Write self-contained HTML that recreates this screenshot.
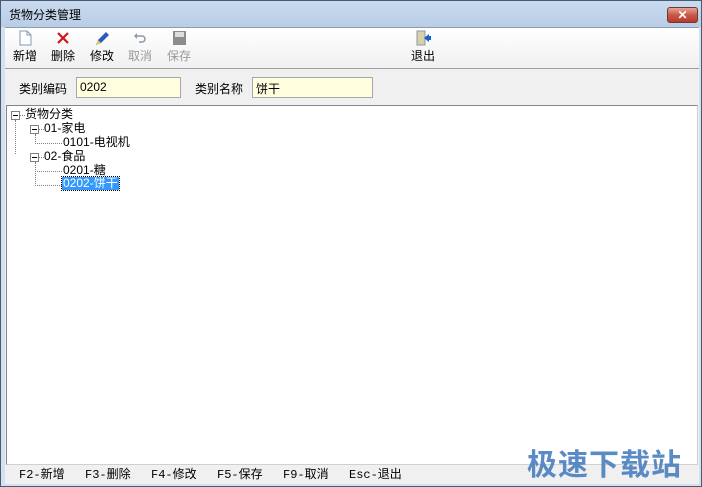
<!DOCTYPE html>
<html><head><meta charset="utf-8"><style>
*{margin:0;padding:0;box-sizing:border-box}
body{width:702px;height:487px;overflow:hidden;background:#eef0f4;font-family:"Liberation Sans","Noto Sans CJK SC","WenQuanYi Zen Hei",sans-serif;font-size:12px;color:#000;position:relative}
.win{position:absolute;left:0;top:0;width:702px;height:487px;border:1px solid #4a5a70;background:linear-gradient(#c9dbef,#b9cde6 26px,#d3e1f0 26px);}
.title{position:absolute;left:8px;top:5px;font-size:12px}
.close{position:absolute;left:666px;top:6px;width:31px;height:16px;border:1px solid #6b3a33;border-radius:3px;background:linear-gradient(#e8a493,#c9584a 50%,#b93a2a);color:#fff;font-weight:bold;text-align:center;line-height:14px;font-size:12px}
.client{position:absolute;left:4px;top:26px;width:694px;height:457px;background:#f0f0f0;border-top:1px solid #8b9bb0}
.tb{position:absolute;left:0;top:0;width:694px;height:41px;background:linear-gradient(#fff,#f0f0f0);border-bottom:1px solid #a0a0a0}
.btn{position:absolute;top:2px;text-align:center;font-size:12px;width:30px}
.btn svg{display:block;margin:0 auto 1px}
.dis{color:#9a9a9a}
.lbl{position:absolute;top:52px}
.inp{position:absolute;top:49px;height:21px;background:#ffffe0;border:1px solid #a8a8a8;padding:2px 3px;font-size:12px}
.tree{position:absolute;left:1px;top:77px;width:692px;height:360px;background:#fff;border:1px solid #828790;border-right-color:#d0d0d0;border-bottom-color:#d0d0d0}
.node{position:absolute;font-size:12px;line-height:13px;white-space:nowrap}
.box{position:absolute;width:9px;height:9px;border:1px solid #808080;background:#fff}
.box:after{content:"";position:absolute;left:1px;top:3px;width:5px;height:1px;background:#000}
.dv{position:absolute;border-left:1px dotted #808080}
.dh{position:absolute;border-top:1px dotted #808080}
.sb{position:absolute;left:0;top:437px;width:694px;height:20px;font-family:"Liberation Mono","Noto Sans CJK SC",monospace;font-size:12px}
.sb span{position:absolute;top:0px}
.wm{position:absolute;left:527px;top:440px;font-size:30px;font-weight:bold;color:#4a7fc0;letter-spacing:1px;opacity:.9}
</style></head><body>
<div class="win">
<div class="title">货物分类管理</div>
<div class="close">✕</div>
<div class="client">
 <div class="tb">
  <div class="btn" style="left:5px"><svg width="16" height="16"><path d="M3 1h7l4 4v10H3z" fill="#fff" stroke="#7e9ab8"/><path d="M10 1v4h4" fill="none" stroke="#7e9ab8"/></svg>新增</div>
  <div class="btn" style="left:43px"><svg width="16" height="16"><path d="M3 3l10 10M13 3L3 13" stroke="#d01515" stroke-width="2.2"/></svg>删除</div>
  <div class="btn" style="left:82px"><svg width="16" height="16"><path d="M2 15l2-5 8-8 3 3-8 8z" fill="#2a5bc0"/><path d="M2 15l2-5 3 3z" fill="#e8c060"/></svg>修改</div>
  <div class="btn dis" style="left:120px"><svg width="16" height="16"><path d="M4 6h6a3 3 0 010 6H7" fill="none" stroke="#8a98a8" stroke-width="1.5"/><path d="M2 6l3-3v6z" fill="#8a98a8"/></svg>取消</div>
  <div class="btn dis" style="left:159px"><svg width="16" height="16"><rect x="2" y="1" width="13" height="14" fill="#8c8c8c"/><rect x="4" y="2" width="9" height="5" fill="#ddd"/></svg>保存</div>
  <div class="btn" style="left:403px"><svg width="16" height="16"><rect x="2" y="1" width="8" height="14" fill="#d8d0a8" stroke="#8a98a8"/><path d="M9 8l5-4v2h2v4h-2v2z" fill="#1a63c8"/></svg>退出</div>
 </div>
 <div class="lbl" style="left:14px">类别编码</div>
 <div class="inp" style="left:71px;width:105px">0202</div>
 <div class="lbl" style="left:190px">类别名称</div>
 <div class="inp" style="left:247px;width:121px">饼干</div>
 <div class="tree">
  <div class="box" style="left:4px;top:5px"></div><div class="dh" style="left:13px;top:9px;width:5px"></div>
  <div class="node" style="left:18px;top:2px">货物分类</div>
  <div class="dv" style="left:8px;top:14px;height:34px"></div>
  <div class="box" style="left:23px;top:19px"></div><div class="dh" style="left:32px;top:23px;width:5px"></div>
  <div class="node" style="left:37px;top:16px">01-家电</div>
  <div class="dv" style="left:28px;top:28px;height:8px"></div><div class="dh" style="left:28px;top:37px;width:27px"></div>
  <div class="node" style="left:56px;top:30px">0101-电视机</div>
  <div class="box" style="left:23px;top:47px"></div><div class="dh" style="left:32px;top:51px;width:5px"></div>
  <div class="node" style="left:37px;top:44px">02-食品</div>
  <div class="dv" style="left:28px;top:56px;height:22px"></div>
  <div class="dh" style="left:28px;top:65px;width:27px"></div>
  <div class="node" style="left:56px;top:58px">0201-糖</div>
  <div class="dh" style="left:28px;top:79px;width:27px"></div>
  <div class="node" style="left:55px;top:71px;background:#3399ff;color:#fff;padding:0 1px;outline:1px dotted #000">0202-饼干</div>
 </div>
 <div class="sb">
  <span style="left:14px">F2-新增</span><span style="left:80px">F3-删除</span><span style="left:146px">F4-修改</span><span style="left:212px">F5-保存</span><span style="left:278px">F9-取消</span><span style="left:344px">Esc-退出</span>
 </div>
</div>
</div>
<div class="wm">极速下载站</div>
</body></html>
